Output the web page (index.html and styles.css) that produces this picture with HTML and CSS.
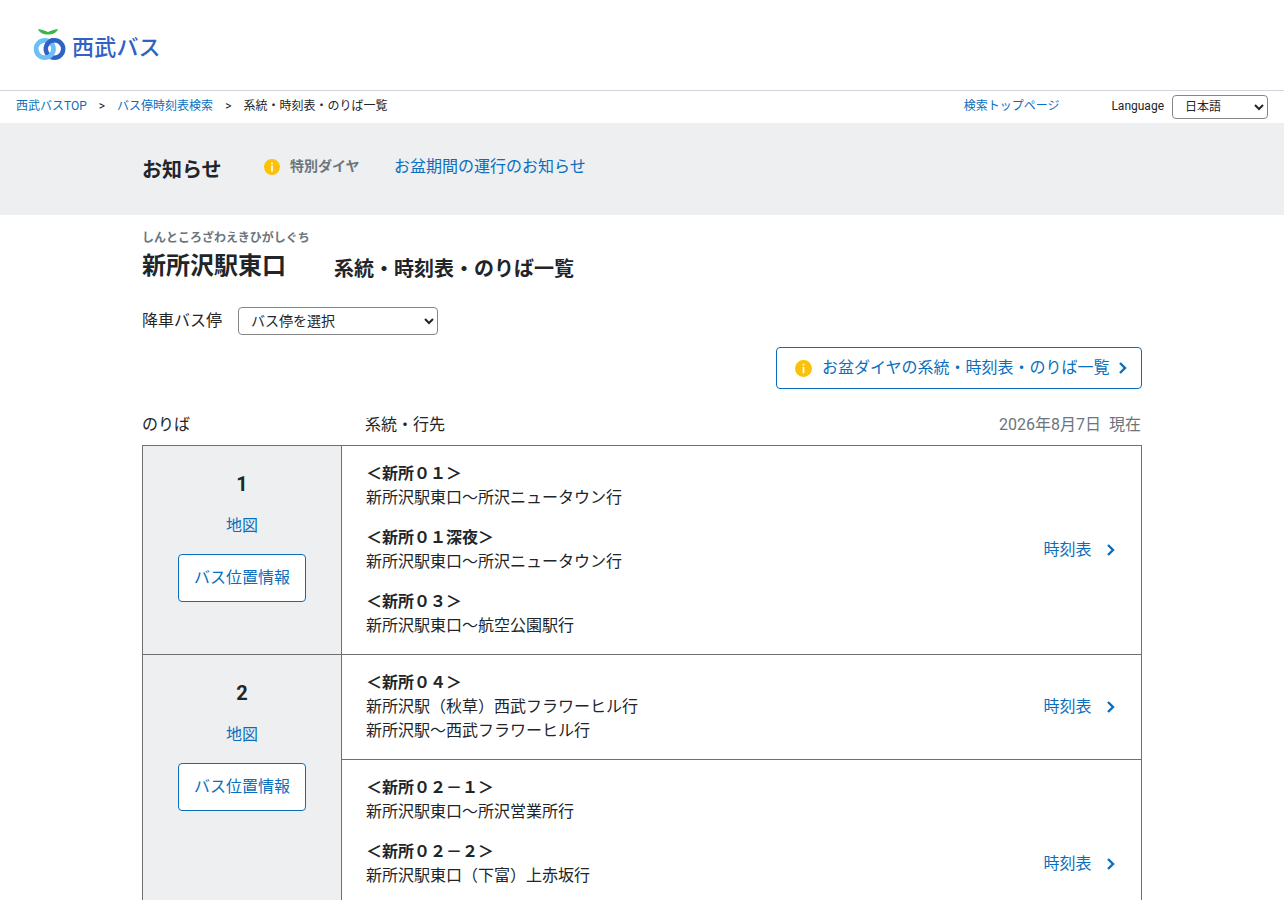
FILE: index.html
```html
<!DOCTYPE html>
<html lang="ja">
<head>
<meta charset="utf-8">
<title>系統・時刻表・のりば一覧</title>
<link rel="stylesheet" href="styles.css">
</head>
<body>
<header class="site-header">
  <a class="logo" href="#">
    <svg class="logo-mark" width="34" height="34" viewBox="0 0 34 34">
      <path d="M6 1C10 1.500 13 2.500 16 4C19 2.500 22 1.500 26 1C25 4.500 21 6.500 16 6.500C11 6.500 7 4.500 6 1Z" fill="#3cb54a"/>
      <circle cx="22.500" cy="21" r="8.700" fill="none" stroke="#2f62c4" stroke-width="4.500"/>
      <circle cx="12.800" cy="21" r="8.700" fill="none" stroke="#6cc0f5" stroke-width="4.800"/>
      <path d="M22.500 12.300A8.700 8.700 0 0 0 15 16.500" fill="none" stroke="#2f62c4" stroke-width="4.500"/>
    </svg>
    <span class="logo-text">西武バス</span>
  </a>
</header>
<nav class="topbar">
  <ol class="crumbs">
    <li><a href="#">西武バスTOP</a></li>
    <li class="sep">&gt;</li>
    <li><a href="#">バス停時刻表検索</a></li>
    <li class="sep">&gt;</li>
    <li>系統・時刻表・のりば一覧</li>
  </ol>
  <a class="search-top" href="#">検索トップページ</a>
  <label class="lang-label" for="lang">Language</label>
  <select class="lang-select" id="lang"><option>日本語</option></select>
</nav>
<section class="notice">
  <div class="wrap notice-inner">
    <h2 class="notice-title">お知らせ</h2>
    <svg class="info notice-icon" width="16" height="16" viewBox="0 0 16 16"><circle cx="8" cy="8" r="8" fill="#fcc10a"/><rect x="7.200" y="3.500" width="1.600" height="1.800" fill="#fff"/><rect x="7.200" y="6.500" width="1.600" height="6" fill="#fff"/></svg>
    <span class="notice-tag">特別ダイヤ</span>
    <a class="notice-link" href="#">お盆期間の運行のお知らせ</a>
  </div>
</section>
<main class="wrap">
  <div class="kana">しんところざわえきひがしぐち</div>
  <div class="title-row">
    <h1 class="stop-name">新所沢駅東口</h1>
    <h2 class="page-title">系統・時刻表・のりば一覧</h2>
  </div>
  <div class="alight-row">
    <label class="alight-label" for="alight">降車バス停</label>
    <select class="alight-select" id="alight"><option>バス停を選択</option></select>
  </div>
  <div class="special-row">
    <a class="special-btn" href="#">
      <svg class="info" width="17" height="17" viewBox="0 0 16 16"><circle cx="8" cy="8" r="8" fill="#fcc10a"/><rect x="7.200" y="3.500" width="1.600" height="1.800" fill="#fff"/><rect x="7.200" y="6.500" width="1.600" height="6" fill="#fff"/></svg>
      <span>お盆ダイヤの系統・時刻表・のりば一覧</span>
      <svg class="chev" width="10" height="12" viewBox="0 0 10 12"><path d="M2 1L7 6L2 11" fill="none" stroke="#0a6ebd" stroke-width="2.400"/></svg>
    </a>
  </div>
  <div class="table-head">
    <span class="col-stop">のりば</span>
    <span class="col-route">系統・行先</span>
    <span class="col-date">2026年8月7日&nbsp;&nbsp;現在</span>
  </div>
  <table class="routes">
    <tr>
      <th class="stop-cell">
        <div class="stop-no">1</div>
        <a class="map-link" href="#">地図</a>
        <a class="loc-btn" href="#">バス位置情報</a>
      </th>
      <td class="route-cell">
        <div class="route"><b>＜新所０１＞</b><span>新所沢駅東口〜所沢ニュータウン行</span></div>
        <div class="route"><b>＜新所０１深夜＞</b><span>新所沢駅東口〜所沢ニュータウン行</span></div>
        <div class="route"><b>＜新所０３＞</b><span>新所沢駅東口〜航空公園駅行</span></div>
      </td>
      <td class="tt-cell"><a class="tt-link" href="#">時刻表<svg class="chev" width="10" height="12" viewBox="0 0 10 12"><path d="M2 1L7 6L2 11" fill="none" stroke="#0a6ebd" stroke-width="2.400"/></svg></a></td>
    </tr>
    <tr>
      <th class="stop-cell" rowspan="2">
        <div class="stop-no">2</div>
        <a class="map-link" href="#">地図</a>
        <a class="loc-btn" href="#">バス位置情報</a>
      </th>
      <td class="route-cell">
        <div class="route"><b>＜新所０４＞</b><span>新所沢駅（秋草）西武フラワーヒル行</span><span>新所沢駅〜西武フラワーヒル行</span></div>
      </td>
      <td class="tt-cell"><a class="tt-link" href="#">時刻表<svg class="chev" width="10" height="12" viewBox="0 0 10 12"><path d="M2 1L7 6L2 11" fill="none" stroke="#0a6ebd" stroke-width="2.400"/></svg></a></td>
    </tr>
    <tr class="tall-row">
      <td class="route-cell">
        <div class="route"><b>＜新所０２－１＞</b><span>新所沢駅東口〜所沢営業所行</span></div>
        <div class="route"><b>＜新所０２－２＞</b><span>新所沢駅東口（下富）上赤坂行</span></div>
      </td>
      <td class="tt-cell"><a class="tt-link" href="#">時刻表<svg class="chev" width="10" height="12" viewBox="0 0 10 12"><path d="M2 1L7 6L2 11" fill="none" stroke="#0a6ebd" stroke-width="2.400"/></svg></a></td>
    </tr>
  </table>
</main>
</body>
</html>
```
FILE: styles.css
```css
* { box-sizing: border-box; }
html, body { margin: 0; padding: 0; height: 900px; overflow: hidden; }
body { font-family: Roboto, "Noto Sans CJK JP", sans-serif; color: #212529; background: #fff; font-size: 16px; line-height: 24px; }
a { color: #0a6ebd; text-decoration: none; }
h1, h2 { margin: 0; }

.site-header { height: 91px; border-bottom: 1px solid #ced4da; padding: 28px 0 0 32px; }
.logo { display: flex; width: fit-content; align-items: flex-start; gap: 6px; }
.logo-mark { display: block; }
.logo-text { font-size: 22px; line-height: 34px; font-weight: 500; color: #2f62c4; margin-top: 3px; letter-spacing: 0.2px; }

.topbar { height: 32px; display: flex; align-items: center; padding: 0 16px 2px; font-size: 12px; line-height: 18px; }
.crumbs { list-style: none; margin: 0; padding: 0; display: flex; flex: 1; gap: 12px; }
.search-top { margin-right: 52px; }
.lang-label { margin-right: 8px; }
.lang-select { width: 96px; height: 24px; margin-top: 2px; font: 12px Roboto, "Noto Sans CJK JP", sans-serif; color: #212529; background: #fff; border: 1px solid #868686; border-radius: 4px; padding-left: 8px; }

.wrap { width: 1000px; margin: 0 auto; }
.notice { background: #edeff1; height: 92px; }
.notice-inner { display: flex; align-items: flex-start; padding-top: 32px; }
.notice-title { font-size: 20px; line-height: 30px; font-weight: 700; width: 122px; }
.notice-icon { margin: 4px 10px 0 0; }
.notice-tag { font-size: 14px; line-height: 22px; font-weight: 700; color: #6c757d; width: 104px; }
.notice-link { line-height: 24px; }

.kana { font-size: 12px; line-height: 18px; font-weight: 700; color: #6c757d; margin-top: 14px; }
.title-row { display: flex; align-items: flex-end; gap: 48px; margin-top: 1px; }
.stop-name { font-size: 24px; line-height: 36px; font-weight: 700; }
.page-title { font-size: 20px; line-height: 30px; font-weight: 700; }
.alight-row { display: flex; align-items: center; gap: 16px; margin-top: 23px; }
.alight-label { line-height: 24px; }
.alight-select { width: 200px; height: 28px; font: 14px Roboto, "Noto Sans CJK JP", sans-serif; color: #212529; background: #fff; border: 1px solid #868686; border-radius: 4px; padding-left: 8px; }

.special-row { display: flex; justify-content: flex-end; margin-top: 12px; }
.special-btn { width: 366px; height: 42px; border: 1px solid #0a6ebd; border-radius: 4px; display: flex; align-items: center; padding-left: 18px; background: #fff; }
.special-btn .info { margin-right: 10px; }
.special-btn .chev { margin-left: 8px; }

.table-head { display: flex; margin-top: 23px; height: 33px; line-height: 24px; padding: 1px 1px 0 0; }
.col-stop { width: 223px; }
.col-route { flex: 1; }
.col-date { color: #6c757d; }

.routes { width: 1000px; border-collapse: collapse; table-layout: fixed; }
.routes th, .routes td { border-top: 1px solid #707070; border-bottom: 1px solid #707070; padding: 0; }
.stop-cell { width: 199px; background: #edeff1; border-left: 1px solid #707070; border-right: 1px solid #707070; vertical-align: top; padding-top: 24px !important; font-weight: 400; text-align: center; }
.stop-no { font-size: 20px; line-height: 28px; font-weight: 700; }
.map-link { display: block; margin-top: 16px; line-height: 24px; }
.loc-btn { display: flex; width: 128px; height: 48px; margin: 16px auto 0; align-items: center; justify-content: center; background: #fff; border: 1px solid #0a6ebd; border-radius: 4px; }
.route-cell { padding: 16px 24px !important; vertical-align: top; }
.route { display: flex; flex-direction: column; }
.route + .route { margin-top: 16px; }
.route b { font-weight: 700; }
.route span { display: block; }
.tt-cell { width: 98px; border-right: 1px solid #707070; }
.tt-link { display: flex; align-items: center; gap: 14px; }
.tall-row { height: 209px; }
```
